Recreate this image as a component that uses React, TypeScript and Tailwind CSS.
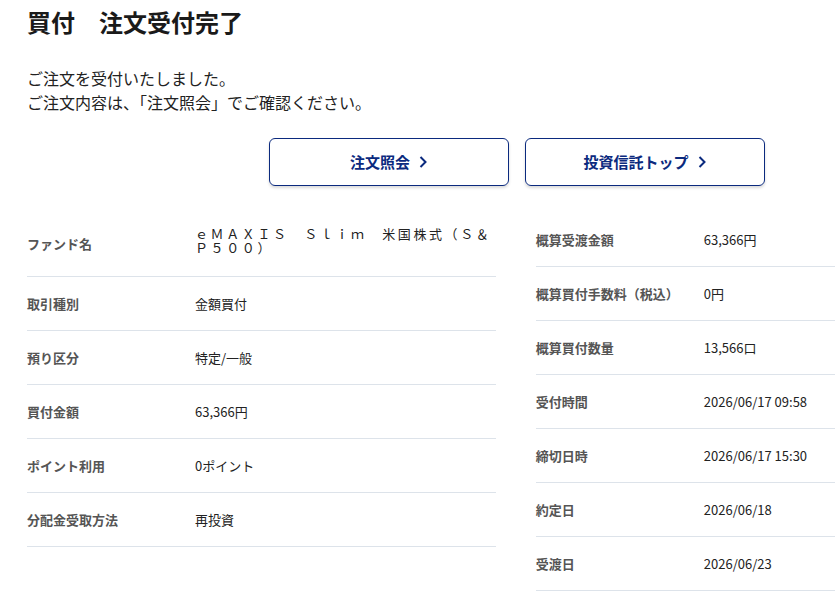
export default function App() {
  const left = [
    ["ファンド名", "fund"],
    ["取引種別", "金額買付"],
    ["預り区分", "特定/一般"],
    ["買付金額", "63,366円"],
    ["ポイント利用", "0ポイント"],
    ["分配金受取方法", "再投資"],
  ];
  const right = [
    ["概算受渡金額", "63,366円"],
    ["概算買付手数料（税込）", "0円"],
    ["概算買付数量", "13,566口"],
    ["受付時間", "2026/06/17 09:58"],
    ["締切日時", "2026/06/17 15:30"],
    ["約定日", "2026/06/18"],
    ["受渡日", "2026/06/23"],
  ];
  const Chev = () => (
    <svg width="10" height="14" viewBox="0 0 10 14" className="ml-2">
      <path d="M2.5 2l5 5-5 5" fill="none" stroke="currentColor" strokeWidth="2" />
    </svg>
  );
  return (
    <div className="w-[835px] h-[591px] overflow-hidden bg-white text-[#222] pl-[27px]" style={{ fontFamily: '"Noto Sans CJK JP", "Noto Sans", sans-serif' }}>
      <h1 className="pt-[5px] text-[24px] font-bold leading-[34px] text-[#1a1a1a]">買付　注文受付完了</h1>
      <p className="mt-[27px] text-[16px] leading-[24px]">ご注文を受付いたしました。<br />ご注文内容は、「注文照会」でご確認ください。</p>
      <div className="mt-[24px] flex gap-[16px] pl-[242px]">
        {["注文照会", "投資信託トップ"].map((t) => (
          <div key={t} className="w-[240px] h-[48px] flex items-center justify-center rounded-[6px] border border-[#0b2a7e] text-[#0b2a7e] font-bold text-[15px] shadow-[0_2px_3px_rgba(0,0,0,0.15)]">
            {t}<Chev />
          </div>
        ))}
      </div>
      <div className="mt-[25px] flex gap-[40px]">
        <div className="w-[470px]">
          {left.map(([l, v], i) => (
            <div key={l} className={`flex items-center border-b border-[#dde3ea] ${i === 0 ? "h-[66px]" : "h-[54px]"}`}>
              <div className="w-[168px] text-[13px] font-bold text-[#555]">{l}</div>
              {v === "fund" ? (
                <div className="flex-1 text-[13px] leading-[14px] tracking-[0.2em] text-[#222] mt-[-6px]">ｅＭＡＸＩＳ　Ｓｌｉｍ　米国株式（Ｓ＆Ｐ５００）</div>
              ) : (
                <div className="flex-1 text-[13px]">{v}</div>
              )}
            </div>
          ))}
        </div>
        <div className="w-[300px] mt-[2px]">
          {right.map(([l, v]) => (
            <div key={l} className="flex items-center h-[54px] border-b border-[#dde3ea]">
              <div className="w-[168px] text-[13px] font-bold text-[#555] whitespace-nowrap">{l}</div>
              <div className="flex-1 text-[13px]">{v}</div>
            </div>
          ))}
        </div>
      </div>
    </div>
  );
}
